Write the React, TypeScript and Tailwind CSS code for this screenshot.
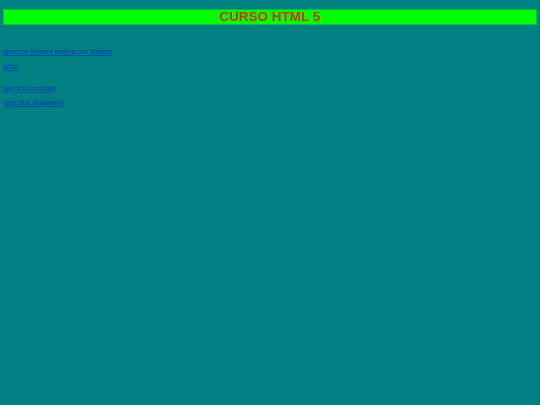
import React from 'react';

const links = [
  { label: 'ejercicio primera pagina con imagen', className: 'mt-[23.5px]' },
  { label: 'arbol', className: 'mt-[6px]' },
  { label: 'ejercicio prioridad', className: 'mt-[13.5px]' },
  { label: 'ejerccio6 obligatorio', className: 'mt-[6px]' },
];

export default function App() {
  return (
    <div className="min-h-[405px] bg-[#008080] px-[3px] pt-[8.5px] font-['Liberation_Sans',Arial,sans-serif]">
      <h1 className="h-[16px] border border-[#00c040] bg-[#00ff00] text-center text-[13.5px] font-bold leading-[14px] text-[#c04000]">
        CURSO HTML 5
      </h1>
      <div className="flex flex-col items-start">
        {links.map((link) => (
          <a key={link.label} href="#" className={`${link.className} text-[6.8px] leading-[8.5px] text-[#0038c0] underline decoration-[#0050b0]`}>
            {link.label}
          </a>
        ))}
      </div>
    </div>
  );
}
